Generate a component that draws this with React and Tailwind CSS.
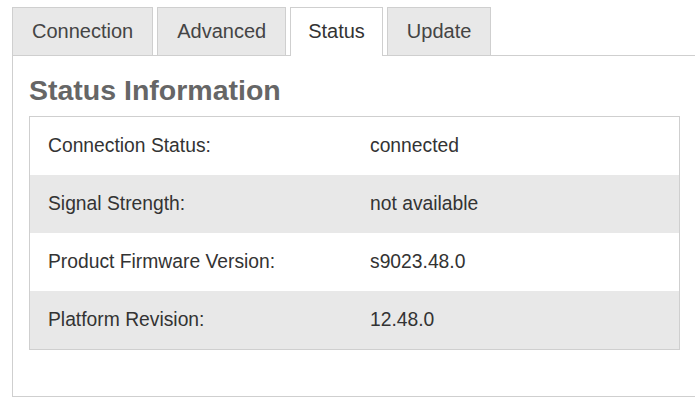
import React from "react";

const tabs = ["Connection", "Advanced", "Status", "Update"];

const rows = [
  ["Connection Status:", "connected"],
  ["Signal Strength:", "not available"],
  ["Product Firmware Version:", "s9023.48.0"],
  ["Platform Revision:", "12.48.0"],
];

const StatusPage = () => {
  const active = "Status";

  return (
    <div
      className="w-[695px] h-[398px] overflow-hidden bg-white text-[#333]"
      style={{ fontFamily: '"Liberation Sans", Arial, sans-serif' }}
    >
      <div className="pt-[7px] pl-[12px] w-[720px]">
        {/* tab bar */}
        <div className="flex gap-[4px] border-b border-[#cfcfcf]">
          {tabs.map((tab) =>
            tab === active ? (
              <div
                key={tab}
                className="relative -mb-px px-[17px] pt-[11px] pb-[13px] text-[20px] leading-[24px] bg-white border border-b-0 border-[#cfcfcf] text-[#333]"
              >
                {tab}
              </div>
            ) : (
              <div
                key={tab}
                className="px-[19px] py-[11px] text-[20px] leading-[24px] bg-[#e8e8e8] border border-b-0 border-[#cfcfcf] text-[#444]"
              >
                {tab}
              </div>
            )
          )}
        </div>

        {/* panel */}
        <div className="border-l border-b border-[#cfcfcf] pl-[16px] pt-[18px] pb-[46px]">
          <h2 className="text-[28.5px] leading-[32px] font-bold text-[#666] mb-[10px]">
            Status Information
          </h2>
          <div className="w-[651px] border border-[#cfcfcf]">
            {rows.map(([label, value], i) => (
              <div
                key={label}
                className={`grid grid-cols-[322px_1fr] h-[58px] items-center text-[19.3px] ${
                  i % 2 === 1 ? "bg-[#e8e8e8]" : "bg-white"
                }`}
              >
                <div className="px-[18px]">{label}</div>
                <div className="px-[18px]">{value}</div>
              </div>
            ))}
          </div>
        </div>
      </div>
    </div>
  );
};

export default StatusPage;
